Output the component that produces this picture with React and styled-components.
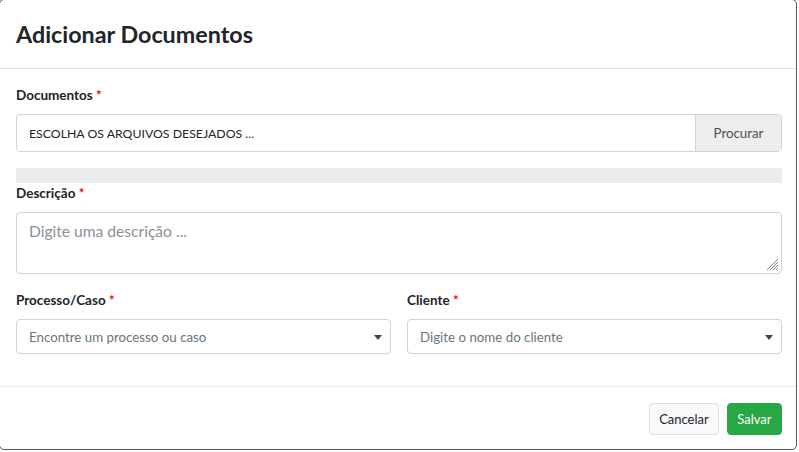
import styled, { createGlobalStyle } from 'styled-components'

const Global = createGlobalStyle`
  html, body { margin: 0; padding: 0; background: #fff; }
  body { font-family: Lato, "Liberation Sans", sans-serif; color: #212529; }
  * { box-sizing: border-box; }
`

const Page = styled.div`
  width: 799px;
  height: 452px;
  overflow: hidden;
  background: #fff;
`

const Modal = styled.div`
  width: 798px;
  height: 451px;
  margin: -1px 0 0 -1px;
  border: 1px solid #5a5a5a;
  border-radius: 5px;
  background: #fff;
  display: flex;
  flex-direction: column;
`

const Header = styled.div`
  height: 69px;
  padding: 0 16px;
  display: flex;
  align-items: center;
  border-bottom: 1px solid #dee2e6;
`

const Title = styled.h4`
  margin: 0;
  font-size: 23.3px;
  font-weight: 700;
  color: #212529;
`

const Body = styled.div`
  padding: 16px 14px 0 16px;
  flex: 1;
  display: flex;
  flex-direction: column;
`

const Label = styled.label`
  display: block;
  font-size: 13.5px;
  font-weight: 700;
  line-height: 20px;
  margin-bottom: ${p => p.$gap || 9}px;
  color: #212529;
  span { color: #f00; }
`

const FileGroup = styled.div`
  display: flex;
  height: 38px;
  border: 1px solid #ced4da;
  border-radius: 4px;
  overflow: hidden;
`

const FileText = styled.div`
  flex: 1;
  display: flex;
  align-items: center;
  padding: 0 12px;
  font-size: 12.3px;
  color: #212529;
`

const Browse = styled.div`
  width: 86px;
  display: flex;
  align-items: center;
  justify-content: center;
  background: #eeeeee;
  border-left: 1px solid #ced4da;
  font-size: 13.3px;
  color: #495057;
`

const Progress = styled.div`
  height: 15px;
  margin-top: 16px;
  background: #e9ecef;
`

const TextArea = styled.div`
  position: relative;
  height: 62px;
  border: 1px solid #ced4da;
  border-radius: 4px;
  padding: 9px 12px;
  font-size: 15.6px;
  color: #8a9097;
`

const Grip = styled.svg`
  position: absolute;
  right: 2px;
  bottom: 2px;
`

const Field = styled.div`
  margin-top: ${p => p.$top || 0}px;
`

const Row = styled.div`
  display: grid;
  grid-template-columns: 1fr 1fr;
  gap: 16px;
  margin-top: 16px;
`

const Select = styled.div`
  height: 35px;
  border: 1px solid #ced4da;
  border-radius: 4px;
  display: flex;
  align-items: center;
  justify-content: space-between;
  padding: 0 8px 0 12px;
  font-size: 13.3px;
  color: #6c757d;
`

const Caret = styled.svg`
  margin-top: 1px;
`

const Footer = styled.div`
  height: 63px;
  border-top: 1px solid #e9ecef;
  display: flex;
  align-items: flex-start;
  justify-content: flex-end;
  gap: 8px;
  padding: 16px 14px 0 0;
`

const Button = styled.button`
  height: 32px;
  padding: 0 ${p => (p.$primary ? 9.5 : 9)}px;
  border-radius: 4px;
  border: 1px solid ${p => (p.$primary ? '#28a745' : '#dcdfe3')};
  background: ${p => (p.$primary ? '#28a745' : '#f8f9fa')};
  color: ${p => (p.$primary ? '#fff' : '#212529')};
  font-family: Lato, "Liberation Sans", sans-serif;
  font-size: 13px;
`

export default function App() {
  return (
    <Page>
      <Global />
      <Modal>
        <Header>
          <Title>Adicionar Documentos</Title>
        </Header>
        <Body>
          <Field>
            <Label $gap={9}>Documentos <span>*</span></Label>
            <FileGroup>
              <FileText>ESCOLHA OS ARQUIVOS DESEJADOS ...</FileText>
              <Browse>Procurar</Browse>
            </FileGroup>
          </Field>
          <Progress />
          <Field>
            <Label $gap={9}>Descrição <span>*</span></Label>
            <TextArea>
              Digite uma descrição ...
              <Grip width="12" height="12" viewBox="0 0 12 12">
                <path d="M11 3L3 11M11 6L6 11M11 9L9 11M11 0L0 11" stroke="#7a7a7a" strokeWidth="0.9" />
              </Grip>
            </TextArea>
          </Field>
          <Row>
            <Field>
              <Label $gap={9}>Processo/Caso <span>*</span></Label>
              <Select>
                Encontre um processo ou caso
                <Caret width="8" height="5" viewBox="0 0 8 5">
                  <path d="M0 0H8L4 5Z" fill="#444" />
                </Caret>
              </Select>
            </Field>
            <Field>
              <Label $gap={9}>Cliente <span>*</span></Label>
              <Select>
                Digite o nome do cliente
                <Caret width="8" height="5" viewBox="0 0 8 5">
                  <path d="M0 0H8L4 5Z" fill="#444" />
                </Caret>
              </Select>
            </Field>
          </Row>
        </Body>
        <Footer>
          <Button>Cancelar</Button>
          <Button $primary>Salvar</Button>
        </Footer>
      </Modal>
    </Page>
  )
}
